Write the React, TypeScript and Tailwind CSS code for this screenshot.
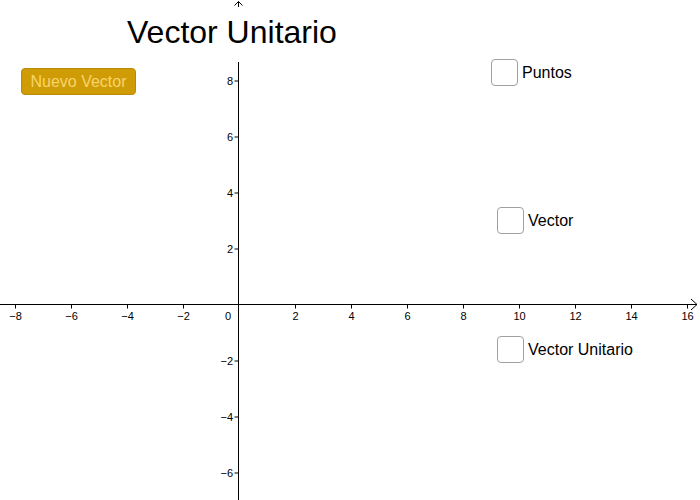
const ox = 238.5
const oy = 304.5
const unit = 28

const xTicks = [-8, -6, -4, -2, 2, 4, 6, 8, 10, 12, 14, 16]
const yTicks = [8, 6, 4, 2, -2, -4, -6]

const fmt = (n: number) => (n < 0 ? "\u2212" + Math.abs(n) : String(n))

const Axes = () => (
  <svg width="700" height="500" className="absolute inset-0" style={{ fontFamily: '"Liberation Sans", Arial, sans-serif' }}>
    {/* x axis */}
    <line x1="0" y1={oy} x2="697" y2={oy} stroke="#000" strokeWidth="1" />
    <polyline points="691,299 697,304.5 691,310" fill="none" stroke="#000" strokeWidth="1" />
    {/* y axis */}
    <line x1={ox} y1="62" x2={ox} y2="500" stroke="#000" strokeWidth="1" />
    <polyline points="234.5,5.5 238.5,1.5 242.5,5.5" fill="none" stroke="#000" strokeWidth="1" />
    <line x1={ox} y1="1.5" x2={ox} y2="7" stroke="#000" strokeWidth="1" />

    {xTicks.map((t) => {
      const x = Math.round(ox + t * unit) + 0.5
      return (
        <g key={"x" + t}>
          <line x1={x} y1={oy} x2={x} y2={oy + 4} stroke="#000" strokeWidth="1" />
          <text x={x} y="320" fontSize="11" textAnchor="middle" fill="#000">
            {fmt(t)}
          </text>
        </g>
      )
    })}
    <text x="228" y="320" fontSize="11" textAnchor="middle" fill="#000">0</text>

    {yTicks.map((t) => {
      const y = Math.round(oy - t * unit) - 0.5
      return (
        <g key={"y" + t}>
          <line x1={ox - 4} y1={y + 0.5} x2={ox} y2={y + 0.5} stroke="#000" strokeWidth="1" />
          <text x="233" y={y + 4.5} fontSize="11" textAnchor="end" fill="#000">
            {fmt(t)}
          </text>
        </g>
      )
    })}
  </svg>
)

const Check = ({ label, left, top }: { label: string; left: number; top: number }) => (
  <label className="absolute flex items-center gap-[4px] text-[16px] text-black" style={{ left, top }}>
    <span className="block w-[27px] h-[27px] rounded-[4px] border-[1.5px] border-[#a0a0a0] bg-white" />
    <span className="leading-none">{label}</span>
  </label>
)

export default function App() {
  return (
    <div
      className="relative w-[700px] h-[500px] bg-white overflow-hidden"
      style={{ fontFamily: '"Liberation Sans", Arial, sans-serif' }}
    >
      <Axes />

      <h1 className="absolute left-[127px] top-[16px] text-[32px] leading-none text-black font-normal">
        Vector Unitario
      </h1>

      <button className="absolute left-[21px] top-[68px] w-[115px] h-[27px] rounded-[4px] bg-[#d09c05] border border-[#b88a08] text-[16px] text-[#f7d46c] leading-none">
        Nuevo Vector
      </button>

      <Check label="Puntos" left={491} top={59} />
      <Check label="Vector" left={497} top={207} />
      <Check label="Vector Unitario" left={497} top={336} />
    </div>
  )
}
